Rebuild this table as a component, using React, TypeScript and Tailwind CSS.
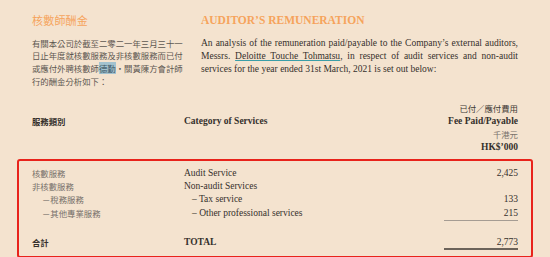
import React from 'react';

// font stacks (Tailwind arbitrary values)
const zh = "font-['Noto_Sans_CJK_TC','Noto_Sans_CJK_SC',sans-serif]";

const rows = [
  { zh: '核數服務', en: 'Audit Service', fee: '2,425', indent: false, rule: false },
  { zh: '非核數服務', en: 'Non-audit Services', fee: '', indent: false, rule: false },
  { zh: '－稅務服務', en: '– Tax service', fee: '133', indent: true, rule: false },
  { zh: '－其他專業服務', en: '– Other professional services', fee: '215', indent: true, rule: true },
];

export default function App() {
  return (
    <div className="w-[550px] h-[257px] bg-[#f4e3cf] overflow-hidden text-[#35302c] font-['Liberation_Serif','Times_New_Roman',serif]">
      {/* Intro */}
      <div className="flex px-[32px] pt-[12px]">
        <div className="w-[169px]">
          <h2 className={`${zh} text-[11px] leading-[16px] text-[#f6a35c] tracking-[0.2px]`}>核數師酬金</h2>
          <p className={`${zh} mt-[8.5px] w-[152px] text-[8.4px] leading-[12.7px] text-[#5d5751]`}>
            有關本公司於截至二零二一年三月三十一日止年度就核數服務及非核數服務而已付或應付外聘核數師
            <span className="bg-[#a3c2cf] text-[#3d5866]">德勤</span>
            •關黃陳方會計師行的酬金分析如下：
          </p>
        </div>
        <div className="w-[317px]">
          <h2 className="text-[11.5px] leading-[16px] font-bold text-[#f6a35c]">AUDITOR’S REMUNERATION</h2>
          <p className="mt-[8.5px] text-[9.5px] leading-[13px] text-justify">
            An analysis of the remuneration paid/payable to the Company’s external auditors, Messrs.{' '}
            <span className="underline decoration-[#3a9ea8] underline-offset-[1px]">Deloitte Touche Tohmatsu</span>, in
            respect of audit services and non-audit services for the year ended 31st March, 2021 is set out below:
          </p>
        </div>
      </div>

      {/* Table header */}
      <div className="mt-[14.5px] px-[32px]">
        <div className={`${zh} text-right text-[8.4px] leading-[13px] text-[#3f3a35]`}>已付／應付費用</div>
        <div className="grid grid-cols-[152px_1fr_auto] text-[9.5px] leading-[13px] font-bold">
          <span className={`${zh} text-[8.4px]`}>服務類別</span>
          <span>Category of Services</span>
          <span className="text-right">Fee Paid/Payable</span>
        </div>
        <div className={`${zh} text-right text-[8.4px] leading-[13px] text-[#7a736c]`}>千港元</div>
        <div className="text-right text-[9.5px] leading-[13px] font-bold">HK$’000</div>
      </div>

      {/* Highlighted rows */}
      <div className="mx-[17px] mt-[5.5px] border-2 border-[#e8231b] rounded-[3px] px-[13px] pt-[5.5px] pb-[6px]">
        {rows.map((r, i) => (
          <div key={i} className="grid grid-cols-[152px_260px_74px] leading-[13.3px]">
            <span className={`${zh} text-[8.4px] text-[#77706a] ${r.indent ? 'pl-[10px]' : ''}`}>{r.zh}</span>
            <span className={`text-[9.5px] ${r.indent ? 'pl-[8px]' : ''}`}>{r.en}</span>
            <span className={`text-right text-[9.5px] ${r.rule ? 'border-b border-[#a59c93]' : ''}`}>{r.fee}</span>
          </div>
        ))}
        <div className="mt-[14.5px] grid grid-cols-[152px_260px_74px] leading-[12px] font-bold">
          <span className={`${zh} text-[8.4px]`}>合計</span>
          <span className="text-[9.5px]">TOTAL</span>
          <span className="text-right text-[9.5px] font-normal border-b-2 border-[#6c635a]">2,773</span>
        </div>
      </div>
    </div>
  );
}
